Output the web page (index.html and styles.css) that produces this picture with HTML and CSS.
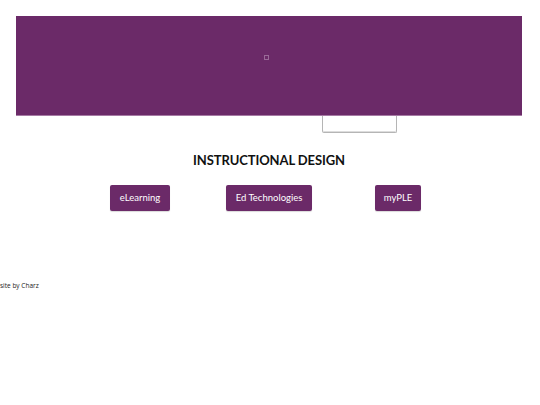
FILE: index.html
```html
<!DOCTYPE html>
<html>
<head>
<meta charset="utf-8">
<link rel="stylesheet" href="styles.css">
</head>
<body>
<div class="page">
  <header class="banner">
    <span class="broken-img"></span>
  </header>
  <div class="search-row">
    <input class="search" type="text">
  </div>
  <h1 class="title">INSTRUCTIONAL DESIGN</h1>
  <nav class="buttons">
    <a class="btn">eLearning</a>
    <a class="btn">Ed Technologies</a>
    <a class="btn">myPLE</a>
  </nav>
</div>
<footer class="footer">site by Charz</footer>
</body>
</html>
```
FILE: styles.css
```css
html, body {
  margin: 0;
  padding: 0;
  background: #fff;
}
body {
  font-family: "Lato", "Open Sans", sans-serif;
}
.page {
  padding: 16px 18px 0 16px;
}
.banner {
  height: 99px;
  background: #6b2a68;
  border-bottom: 1px solid #a67aa4;
  display: flex;
  align-items: flex-start;
  justify-content: center;
}
.broken-img {
  display: block;
  width: 3px;
  height: 3px;
  border: 1px solid #9a6a98;
  margin-top: 39px;
  margin-left: -6px;
}
.search-row {
  display: flex;
  padding-left: 306px;
}
.search {
  width: 73px;
  height: 16px;
  margin: 0;
  padding: 0;
  border: 1px solid #b5b5b5;
  border-top: none;
  border-radius: 0 0 2px 2px;
  box-shadow: inset 0 -1px 0 #ddd;
  outline: none;
}
.title {
  margin: 19px 0 0 0;
  text-align: center;
  font-size: 13px;
  font-weight: 700;
  color: #111;
  letter-spacing: -0.1px;
  line-height: 16px;
  padding-left: 0;
}
.buttons {
  display: flex;
  margin-top: 17px;
  padding-left: 94px;
}
.btn {
  display: block;
  background: #6b2a68;
  color: #fff;
  font-size: 9.5px;
  line-height: 26px;
  height: 26px;
  border-radius: 2px;
  text-align: center;
  box-shadow: 0 1px 1px rgba(0,0,0,0.15);
}
.btn:nth-child(1) { width: 60px; }
.btn:nth-child(2) { width: 86px; margin-left: 56px; }
.btn:nth-child(3) { width: 46px; margin-left: 63px; }
.footer {
  margin-top: 70px;
  font-family: "Open Sans", sans-serif;
  font-size: 6.5px;
  color: #222;
  line-height: 10px;
}
```
